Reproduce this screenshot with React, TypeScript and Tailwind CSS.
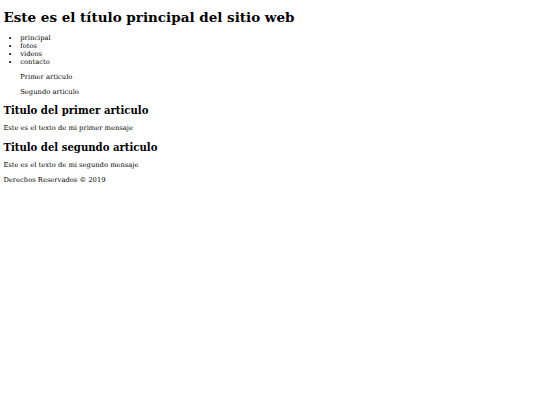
export default function App() {
  return (
    <div className="min-h-screen bg-white px-[3.375px] py-[0.1px] font-['DejaVu_Serif',serif] text-[6.75px] leading-[normal] text-black">
      <header>
        <h1 className="my-[9.05px] text-[13.5px] font-bold leading-[normal]">
          Este es el título principal del sitio web
        </h1>
        <nav>
          <ul className="my-[6.75px] list-disc pl-[16.875px]">
            <li>principal</li>
            <li>fotos</li>
            <li>videos</li>
            <li>contacto</li>
          </ul>
        </nav>
      </header>
      <aside className="pl-[16.875px]">
        <p className="my-[6.75px]">Primer articulo</p>
        <p className="my-[6.75px]">Segundo articulo</p>
      </aside>
      <main>
        <article>
          <h2 className="my-[8.4px] text-[10.125px] font-bold leading-[normal]">Titulo del primer articulo</h2>
          <p className="my-[6.75px]">Este es el texto de mi primer mensaje</p>
        </article>
        <article>
          <h2 className="my-[8.4px] text-[10.125px] font-bold leading-[normal]">Titulo del segundo articulo</h2>
          <p className="my-[6.75px]">Este es el texto de mi segundo mensaje</p>
        </article>
      </main>
      <footer>
        <p className="my-[6.75px]">Derechos Reservados © 2019</p>
      </footer>
    </div>
  );
}
